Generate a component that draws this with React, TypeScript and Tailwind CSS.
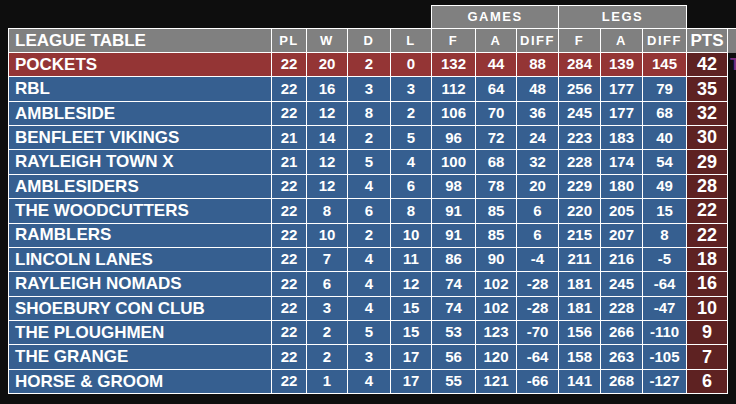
import React from 'react';

type Team = [string, number, number, number, number, number, number, number, number, number, number, number];

const teams: Team[] = [
  ['POCKETS', 22, 20, 2, 0, 132, 44, 88, 284, 139, 145, 42],
  ['RBL', 22, 16, 3, 3, 112, 64, 48, 256, 177, 79, 35],
  ['AMBLESIDE', 22, 12, 8, 2, 106, 70, 36, 245, 177, 68, 32],
  ['BENFLEET VIKINGS', 21, 14, 2, 5, 96, 72, 24, 223, 183, 40, 30],
  ['RAYLEIGH TOWN X', 21, 12, 5, 4, 100, 68, 32, 228, 174, 54, 29],
  ['AMBLESIDERS', 22, 12, 4, 6, 98, 78, 20, 229, 180, 49, 28],
  ['THE WOODCUTTERS', 22, 8, 6, 8, 91, 85, 6, 220, 205, 15, 22],
  ['RAMBLERS', 22, 10, 2, 10, 91, 85, 6, 215, 207, 8, 22],
  ['LINCOLN LANES', 22, 7, 4, 11, 86, 90, -4, 211, 216, -5, 18],
  ['RAYLEIGH NOMADS', 22, 6, 4, 12, 74, 102, -28, 181, 245, -64, 16],
  ['SHOEBURY CON CLUB', 22, 3, 4, 15, 74, 102, -28, 181, 228, -47, 10],
  ['THE PLOUGHMEN', 22, 2, 5, 15, 53, 123, -70, 156, 266, -110, 9],
  ['THE GRANGE', 22, 2, 3, 17, 56, 120, -64, 158, 263, -105, 7],
  ['HORSE & GROOM', 22, 1, 4, 17, 55, 121, -66, 141, 268, -127, 6],
];

// widths for PL, W, D, L, F, A, DIFF, F, A, DIFF (PTS separate)
const statWidths = [
  'w-[35px]', 'w-[41px]', 'w-[43px]', 'w-[41px]',
  'w-[44px]', 'w-[41px]', 'w-[42px]',
  'w-[42px]', 'w-[42px]', 'w-[44px]',
];
const statLabels = ['PL', 'W', 'D', 'L', 'F', 'A', 'DIFF', 'F', 'A', 'DIFF'];

const cell = 'shrink-0 flex items-center justify-center border-r border-b border-white';

const App: React.FC = () => {
  return (
    <div className="w-[736px] h-[404px] overflow-hidden bg-[#0e0e0e] pl-2 pt-[5px] font-['Liberation_Sans',Arial,sans-serif] font-bold text-white">
      {/* group headings */}
      <div className="flex h-[23px]">
        <div className="w-[423px] shrink-0" />
        <div className="w-[128px] shrink-0 flex items-center justify-center bg-[#808080] border-l border-t border-r border-white text-[13px] tracking-[1.5px]">
          GAMES
        </div>
        <div className="w-[128px] shrink-0 flex items-center justify-center bg-[#808080] border-t border-r border-white text-[13px] tracking-[1.5px]">
          LEGS
        </div>
      </div>

      <div className="w-max border-l border-t border-white">
        {/* column headings */}
        <div className="flex h-[24px] bg-[#808080]">
          <div className="shrink-0 w-[263px] flex items-center pl-[6px] border-r border-b border-white text-[17px]">
            LEAGUE TABLE
          </div>
          {statLabels.map((label, i) => (
            <div key={i} className={`${cell} ${statWidths[i]} text-[13px] tracking-[1.5px]`}>
              {label}
            </div>
          ))}
          <div className={`${cell} w-[41px] text-[17px]`}>PTS</div>
        </div>

        {teams.map((t, idx) => {
          const [name, ...stats] = t;
          const pts = stats[10];
          const rowBg = idx === 0 ? 'bg-[#943535]' : 'bg-[#365f90]';
          return (
            <div key={name} className="flex h-[24.36px]">
              <div className={`shrink-0 w-[263px] flex items-center pl-[6px] border-r border-b border-white text-[17px] ${rowBg}`}>
                {name}
              </div>
              {stats.slice(0, 10).map((v, i) => (
                <div key={i} className={`${cell} ${statWidths[i]} ${rowBg} text-[15px]`}>
                  {v}
                </div>
              ))}
              <div className={`${cell} w-[41px] bg-[#5e2222] text-[18px]`}>{pts}</div>
              {idx === 0 && (
                <span className="shrink-0 ml-[2px] flex items-center text-[17px] text-[#7e2f80]">T</span>
              )}
            </div>
          );
        })}
      </div>
    </div>
  );
};

export default App;
